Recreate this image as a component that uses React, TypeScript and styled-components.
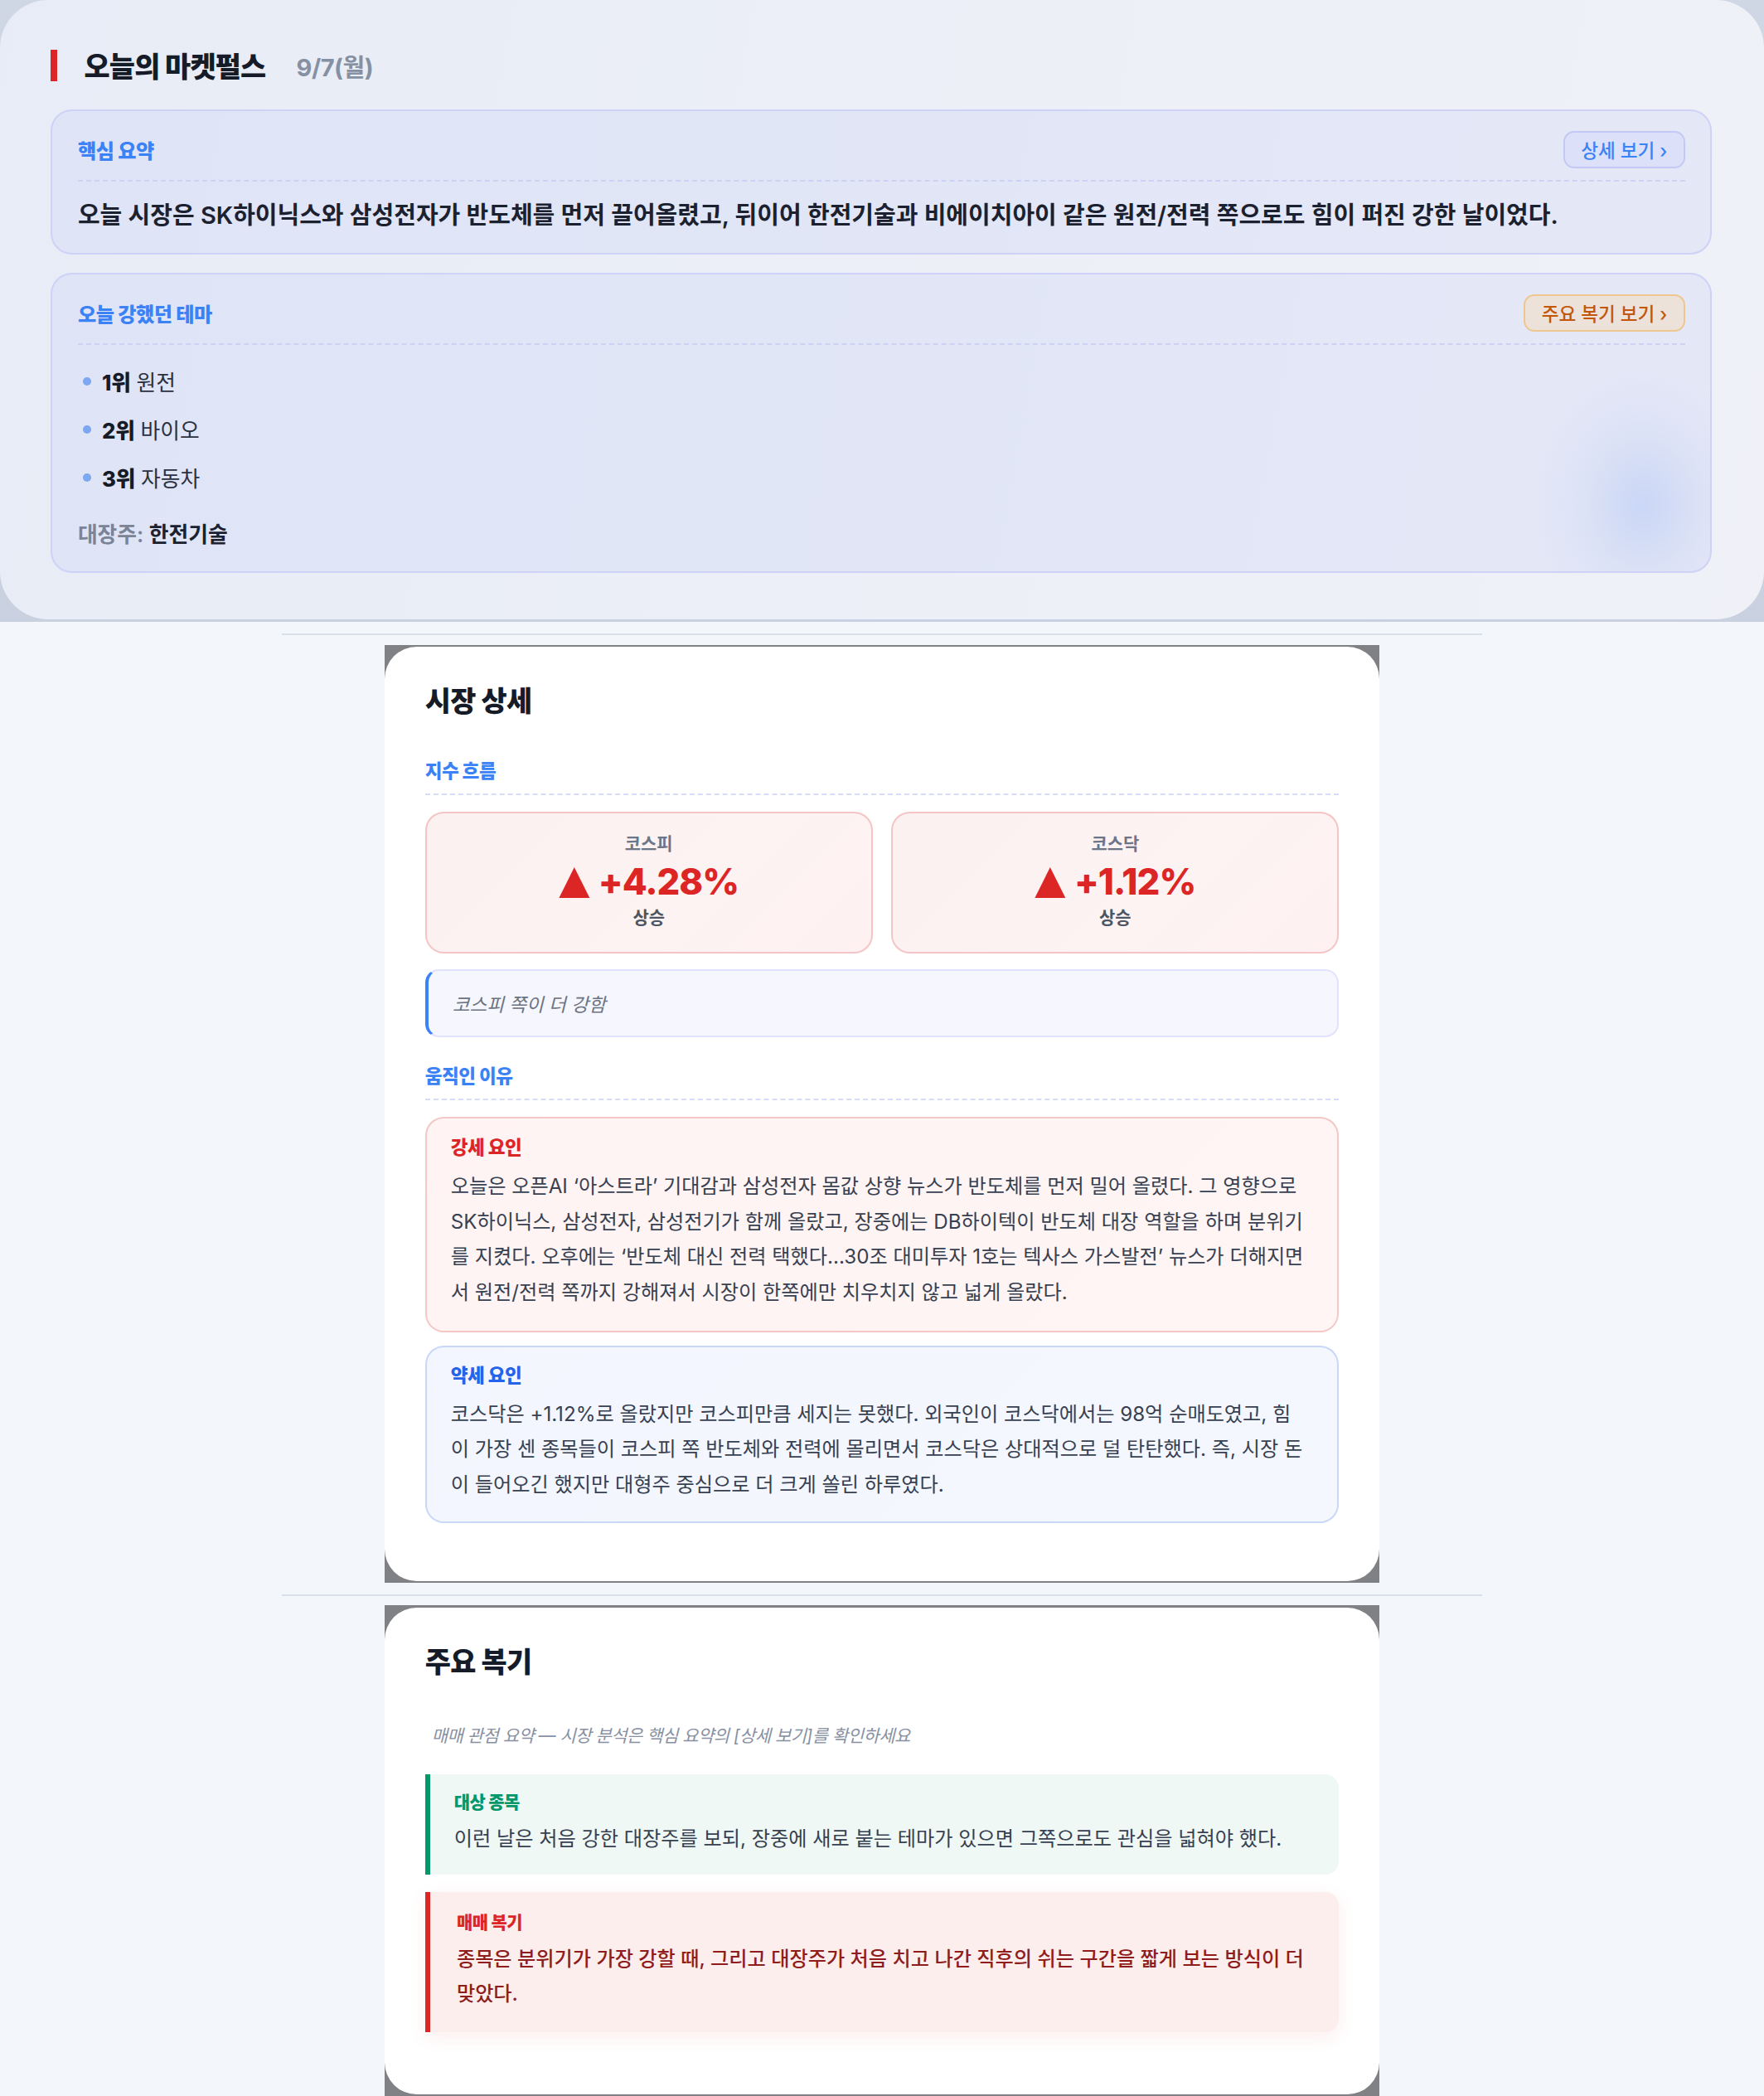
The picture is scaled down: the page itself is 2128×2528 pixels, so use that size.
import React from 'react';
import { createGlobalStyle, styled } from 'styled-components';

const GlobalStyle = createGlobalStyle`
  html {
    zoom: 1.6121;
  }
  body {
    margin: 0;
    background: #f3f6fa;
    font-family: Inter, "Noto Sans CJK KR", sans-serif;
    color: #1f2433;
  }
  * {
    box-sizing: border-box;
  }
`;

const themes = [
  { rank: '1위', name: '원전' },
  { rank: '2위', name: '바이오' },
  { rank: '3위', name: '자동차' },
];

const indices = [
  { name: '코스피', value: '+4.28%', state: '상승' },
  { name: '코스닥', value: '+1.12%', state: '상승' },
];

export default function App() {
  return (
    <>
      <GlobalStyle />
      <HeaderBackdrop>
        <HeaderPanel>
          <TitleRow>
            <AccentBar />
            <PageTitle>오늘의 마켓펄스</PageTitle>
            <DateText>9/7(월)</DateText>
          </TitleRow>

          <GlassCard>
            <CardHead>
              <CardLabel>핵심 요약</CardLabel>
              <PillButton $tone="blue">상세 보기 ›</PillButton>
            </CardHead>
            <SummaryText>
              오늘 시장은 SK하이닉스와 삼성전자가 반도체를 먼저 끌어올렸고, 뒤이어 한전기술과 비에이치아이 같은
              원전/전력 쪽으로도 힘이 퍼진 강한 날이었다.
            </SummaryText>
          </GlassCard>

          <GlassCard $glow>
            <CardHead>
              <CardLabel>오늘 강했던 테마</CardLabel>
              <PillButton $tone="orange">주요 복기 보기 ›</PillButton>
            </CardHead>
            <ThemeList>
              {themes.map((t) => (
                <ThemeItem key={t.rank}>
                  <Dot />
                  <Rank>{t.rank}</Rank>
                  <span>{t.name}</span>
                </ThemeItem>
              ))}
            </ThemeList>
            <Leader>
              <LeaderKey>대장주:</LeaderKey> 한전기술
            </Leader>
          </GlassCard>
        </HeaderPanel>
      </HeaderBackdrop>

      <Separator />

      <Frame>
        <Sheet>
          <SheetTitle>시장 상세</SheetTitle>

          <SectionLabel>지수 흐름</SectionLabel>
          <IndexGrid>
            {indices.map((i) => (
              <IndexCard key={i.name}>
                <IndexName>{i.name}</IndexName>
                <IndexValue>
                  <Arrow>▲</Arrow>
                  {i.value}
                </IndexValue>
                <IndexState>{i.state}</IndexState>
              </IndexCard>
            ))}
          </IndexGrid>
          <Note>코스피 쪽이 더 강함</Note>

          <SectionLabel $gap>움직인 이유</SectionLabel>
          <FactorBox $tone="red">
            <FactorTitle $tone="red">강세 요인</FactorTitle>
            <FactorText>
              오늘은 오픈AI ‘아스트라’ 기대감과 삼성전자 몸값 상향 뉴스가 반도체를 먼저 밀어 올렸다. 그 영향으로
              SK하이닉스, 삼성전자, 삼성전기가 함께 올랐고, 장중에는 DB하이텍이 반도체 대장 역할을 하며 분위기를
              지켰다. 오후에는 ‘반도체 대신 전력 택했다...30조 대미투자 1호는 텍사스 가스발전’ 뉴스가 더해지면서
              원전/전력 쪽까지 강해져서 시장이 한쪽에만 치우치지 않고 넓게 올랐다.
            </FactorText>
          </FactorBox>
          <FactorBox $tone="blue">
            <FactorTitle $tone="blue">약세 요인</FactorTitle>
            <FactorText>
              코스닥은 +1.12%로 올랐지만 코스피만큼 세지는 못했다. 외국인이 코스닥에서는 98억 순매도였고, 힘이 가장
              센 종목들이 코스피 쪽 반도체와 전력에 몰리면서 코스닥은 상대적으로 덜 탄탄했다. 즉, 시장 돈이
              들어오긴 했지만 대형주 중심으로 더 크게 쏠린 하루였다.
            </FactorText>
          </FactorBox>
        </Sheet>
      </Frame>

      <Separator />

      <Frame>
        <Sheet $last>
          <SheetTitle>주요 복기</SheetTitle>
          <Caption>매매 관점 요약 — 시장 분석은 핵심 요약의 [상세 보기]를 확인하세요</Caption>
          <ReviewBox $tone="green">
            <ReviewTitle $tone="green">대상 종목</ReviewTitle>
            <ReviewText $tone="green">
              이런 날은 처음 강한 대장주를 보되, 장중에 새로 붙는 테마가 있으면 그쪽으로도 관심을 넓혀야 했다.
            </ReviewText>
          </ReviewBox>
          <ReviewBox $tone="red">
            <ReviewTitle $tone="red">매매 복기</ReviewTitle>
            <ReviewText $tone="red">
              종목은 분위기가 가장 강할 때, 그리고 대장주가 처음 치고 나간 직후의 쉬는 구간을 짧게 보는 방식이 더
              맞았다.
            </ReviewText>
          </ReviewBox>
        </Sheet>
      </Frame>
    </>
  );
}

const HeaderBackdrop = styled.div`
  background: linear-gradient(180deg, #cfd6e4 0%, #c9d1e0 100%);
  padding-bottom: 2px;
`;

const HeaderPanel = styled.div`
  display: flex;
  flex-direction: column;
  gap: 14px;
  padding: 37px 39px 35px 38px;
  border-radius: 36px;
  background: linear-gradient(100deg, #e8ecf6 0%, #eceff7 45%, #eff1f7 100%);
`;

const TitleRow = styled.div`
  display: flex;
  align-items: center;
  height: 24px;
  margin-bottom: 7px;
`;

const AccentBar = styled.div`
  width: 5px;
  height: 24px;
  background: #dc2626;
  margin-right: 20px;
`;

const PageTitle = styled.h1`
  margin: 0;
  font-size: 21px;
  font-weight: 800;
  letter-spacing: -0.5px;
  color: #161b28;
`;

const DateText = styled.span`
  margin-left: 23px;
  font-size: 18px;
  font-weight: 700;
  letter-spacing: -0.3px;
  color: #8590a3;
`;

const GlassCard = styled.div<{ $glow?: boolean }>`
  position: relative;
  overflow: hidden;
  padding: 14.5px 19px 15px 19px;
  border: 1.5px solid #cdd2f6;
  border-radius: 16px;
  background: linear-gradient(100deg, rgba(219, 226, 247, 0.75) 0%, rgba(224, 228, 246, 0.7) 100%);

  &::after {
    content: '';
    display: ${({ $glow }) => ($glow ? 'block' : 'none')};
    position: absolute;
    right: -40px;
    bottom: -60px;
    width: 180px;
    height: 220px;
    background: radial-gradient(ellipse at center, rgba(180, 200, 245, 0.55) 0%, rgba(200, 212, 245, 0.28) 35%, rgba(225, 230, 247, 0) 65%);
    pointer-events: none;
  }
`;

const CardHead = styled.div`
  display: flex;
  align-items: center;
  justify-content: space-between;
  padding-bottom: 9px;
  border-bottom: 1.5px dashed #cdd1f4;
`;

const CardLabel = styled.span`
  font-size: 15px;
  font-weight: 800;
  letter-spacing: -0.3px;
  color: #3b82f6;
`;

const PillButton = styled.span<{ $tone: 'blue' | 'orange' }>`
  display: inline-flex;
  align-items: center;
  height: 28px;
  padding: 0 12px;
  border-radius: 8px;
  font-size: 14px;
  font-weight: 500;
  border: 1.5px solid ${({ $tone }) => ($tone === 'blue' ? '#c3c9f4' : '#efc68f')};
  background: ${({ $tone }) => ($tone === 'blue' ? '#dce0f8' : '#ede2da')};
  color: ${({ $tone }) => ($tone === 'blue' ? '#3b82f6' : '#c2570c')};
`;

const SummaryText = styled.p`
  margin: 12px 0 0;
  font-size: 18px;
  line-height: 26px;
  font-weight: 600;
  color: #1c2130;
`;

const ThemeList = styled.ul`
  list-style: none;
  margin: 15px 0 0;
  padding: 0 0 0 4px;
  display: flex;
  flex-direction: column;
  gap: 12px;
`;

const ThemeItem = styled.li`
  display: flex;
  align-items: center;
  height: 24px;
  font-size: 16px;
  color: #2b3140;
`;

const Dot = styled.span`
  width: 6px;
  height: 6px;
  border-radius: 50%;
  background: #7ea7f1;
  margin-right: 8px;
`;

const Rank = styled.b`
  font-weight: 800;
  color: #161b28;
  margin-right: 4px;
`;

const Leader = styled.div`
  margin-top: 19px;
  font-size: 16px;
  line-height: 24px;
  font-weight: 600;
  color: #1c2130;
`;

const LeaderKey = styled.span`
  color: #7b8496;
`;

const Separator = styled.div`
  width: 898px;
  height: 1.5px;
  margin: 8.5px auto 7px;
  background: #d9dee9;
`;

const Frame = styled.div`
  width: 744px;
  margin: 0 auto;
  padding: 1.5px 0;
  background: #808184;
`;

const Sheet = styled.div<{ $last?: boolean }>`
  display: flex;
  flex-direction: column;
  padding: 26px 30px ${({ $last }) => ($last ? '46px' : '43px')};
  border-radius: 24px;
  background: #ffffff;
`;

const SheetTitle = styled.h2`
  margin: 0;
  font-size: 21px;
  line-height: 30px;
  font-weight: 800;
  letter-spacing: -0.4px;
  color: #161b28;
`;

const SectionLabel = styled.div<{ $gap?: boolean }>`
  margin-top: ${({ $gap }) => ($gap ? '19px' : '27px')};
  padding-bottom: 7px;
  border-bottom: 1.5px dashed #d9dcf8;
  font-size: 14px;
  line-height: 20px;
  font-weight: 800;
  letter-spacing: -0.3px;
  color: #3b82f6;
`;

const IndexGrid = styled.div`
  display: grid;
  grid-template-columns: 1fr 1fr;
  gap: 14px;
  margin-top: 12px;
`;

const IndexCard = styled.div`
  display: flex;
  flex-direction: column;
  align-items: center;
  height: 106px;
  padding-top: 14px;
  border: 1.5px solid #f5c5c5;
  border-radius: 14px;
  background: linear-gradient(135deg, #fcf1f1 0%, #fdf3f3 60%, #fff1f1 100%);
`;

const IndexName = styled.div`
  font-size: 13px;
  line-height: 18px;
  font-weight: 700;
  color: #6b7689;
`;

const IndexValue = styled.div`
  display: flex;
  align-items: center;
  height: 36px;
  margin-top: 1px;
  font-size: 27px;
  font-weight: 800;
  letter-spacing: -0.6px;
  color: #dc2626;
`;

const Arrow = styled.span`
  font-family: "DejaVu Sans", sans-serif;
  font-size: 30px;
  line-height: 1;
  margin-right: 7px;
  margin-top: -3px;
`;

const IndexState = styled.div`
  font-size: 13px;
  line-height: 18px;
  font-weight: 700;
  color: #4b5563;
`;

const Note = styled.div`
  margin-top: 12px;
  height: 51px;
  display: flex;
  align-items: center;
  padding-left: 18px;
  border: 1.5px solid #e0e3fb;
  border-left: 3px solid #3b82f6;
  border-radius: 10px;
  background: #f5f6fe;
  font-size: 14px;
  font-style: italic;
  color: #6b7280;
`;

const FactorBox = styled.div<{ $tone: 'red' | 'blue' }>`
  margin-top: ${({ $tone }) => ($tone === 'red' ? '12px' : '10px')};
  padding: ${({ $tone }) => ($tone === 'red' ? '12px 18px 15px' : '11px 23px 14px 18px')};
  border: 1.5px solid ${({ $tone }) => ($tone === 'red' ? '#f5c8c8' : '#c8d8f6')};
  border-radius: 14px;
  background: ${({ $tone }) =>
    $tone === 'red'
      ? 'linear-gradient(135deg, #fff3f3 0%, #fff5f5 100%)'
      : 'linear-gradient(135deg, #f3f6fe 0%, #f5f7ff 100%)'};
`;

const FactorTitle = styled.div<{ $tone: 'red' | 'blue' }>`
  font-size: 14px;
  line-height: 20px;
  font-weight: 800;
  letter-spacing: -0.3px;
  color: ${({ $tone }) => ($tone === 'red' ? '#dc2626' : '#2563eb')};
`;

const FactorText = styled.p`
  margin: 6px 0 0;
  font-size: 15px;
  line-height: 26.5px;
  color: #374151;
`;

const Caption = styled.div`
  margin: 31px 0 0 5px;
  font-size: 13px;
  line-height: 18px;
  font-style: italic;
  letter-spacing: -0.3px;
  color: #8790a2;
`;

const ReviewBox = styled.div<{ $tone: 'green' | 'red' }>`
  margin-top: ${({ $tone }) => ($tone === 'green' ? '20px' : '13px')};
  padding: ${({ $tone }) => ($tone === 'green' ? '11px 18px 14px' : '13px 20px 16px')};
  border-left: 4px solid ${({ $tone }) => ($tone === 'green' ? '#059669' : '#dc2626')};
  border-radius: 0 10px 10px 0;
  background: ${({ $tone }) => ($tone === 'green' ? '#eff8f4' : '#fdeeee')};
  box-shadow: ${({ $tone }) => ($tone === 'red' ? '0 4px 14px rgba(220, 38, 38, 0.08)' : 'none')};
`;

const ReviewTitle = styled.div<{ $tone: 'green' | 'red' }>`
  font-size: 13px;
  line-height: 20px;
  font-weight: 800;
  letter-spacing: -0.3px;
  color: ${({ $tone }) => ($tone === 'green' ? '#059669' : '#dc2626')};
`;

const ReviewText = styled.p<{ $tone: 'green' | 'red' }>`
  margin: 4px 0 0;
  font-size: 15px;
  line-height: 26px;
  font-weight: ${({ $tone }) => ($tone === 'red' ? 500 : 400)};
  color: ${({ $tone }) => ($tone === 'green' ? '#374151' : '#8f1d1d')};
`;
